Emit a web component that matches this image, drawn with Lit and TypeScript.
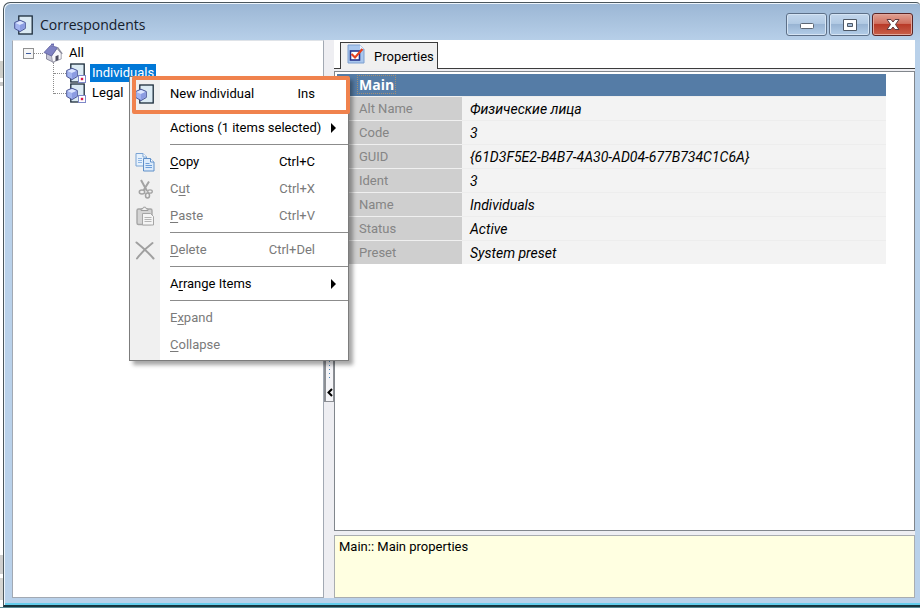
import { LitElement, html, css, svg, nothing } from "lit";
import { customElement, property } from "lit/decorators.js";
import { classMap } from "lit/directives/class-map.js";

type MenuEntry =
  | "separator"
  | { before: string; key: string; after: string; shortcut?: string; icon?: string; disabled?: boolean; submenu?: boolean };

const MENU: MenuEntry[] = [
  { before: "New individual", key: "", after: "", shortcut: "Ins", icon: "page" },
  "separator",
  { before: "Actions (1 items selected)", key: "", after: "", submenu: true },
  "separator",
  { before: "", key: "C", after: "opy", shortcut: "Ctrl+C", icon: "copy" },
  { before: "C", key: "u", after: "t", shortcut: "Ctrl+X", icon: "cut", disabled: true },
  { before: "", key: "P", after: "aste", shortcut: "Ctrl+V", icon: "paste", disabled: true },
  "separator",
  { before: "", key: "D", after: "elete", shortcut: "Ctrl+Del", icon: "delete", disabled: true },
  "separator",
  { before: "A", key: "r", after: "range Items", submenu: true },
  "separator",
  { before: "E", key: "x", after: "pand", disabled: true },
  { before: "", key: "C", after: "ollapse", disabled: true },
];

const PROPERTIES: [string, string][] = [
  ["Alt Name", "Физические лица"],
  ["Code", "3"],
  ["GUID", "{61D3F5E2-B4B7-4A30-AD04-677B734C1C6A}"],
  ["Ident", "3"],
  ["Name", "Individuals"],
  ["Status", "Active"],
  ["Preset", "System preset"],
];

const pageShape = svg`
  <rect x="4.800" y="1" width="13.400" height="18" fill="#dcebf4" stroke="#1b2b3a" stroke-width="1.300"/>
  <path d="M6 5.200 11.300 7.500v6L6 16.600.700 13.500v-6z" fill="#a3b4ef" stroke="#4a5695"/>
  <path d="M1.500 8 6 10l4.500-2L6 6z" fill="#dde6ff"/>
  <path d="M6 10v5.800l4.500-2.700V8z" fill="#8b9ce2"/>`;

const ICONS: Record<string, unknown> = {
  page: pageShape,
  folder: svg`${pageShape}
    <rect x="12.500" y="12.500" width="7" height="7" fill="#fff" stroke="#7f88c8"/>
    <rect x="14.800" y="14.800" width="2.400" height="2.400" fill="#d8194b"/>`,
  house: svg`
    <path d="M3.500 10v6L11 19.500V12z" fill="#c6c6d6" stroke="#77778c" stroke-width=".8"/>
    <path d="M9.500 19.200 18.200 16V10.500L14 5.500 8.500 13z" fill="#f7f7fa" stroke="#8b8b9c" stroke-width=".8"/>
    <path d="M12.500 18.200v-5l3-1.200v5z" fill="#4d4d60"/>
    <path d="M1 9.500 7.500 2.500 14.500 4.500 8.500 13z" fill="#8083c4" stroke="#5e5f9c" stroke-width=".8"/>
    <path d="M14.500 4.500 19.200 10.800" stroke="#8b8b9c" stroke-width="1.300" fill="none"/>
    <path d="M8 .8l3-.3v2.500l-3-.8z" fill="#6c6db0"/>`,
  copy: svg`
    <path d="M1 1.500h7l3.500 3.500v9H1z" fill="#e6f1fc" stroke="#7ba4d4"/>
    <path d="M8 1.500V5h3.500" fill="#fff" stroke="#7ba4d4"/>
    <path d="M3 6.500h4M3 8.500h4M3 10.500h4" stroke="#8fb6e4"/>
    <path d="M8.500 6.500h7l3.500 3.500v9H8.500z" fill="#dcebfb" stroke="#5f8fc8"/>
    <path d="M15.500 6.500V10H19" fill="#fff" stroke="#5f8fc8"/>
    <path d="M10.500 11.500h4M10.500 13.500h6.500M10.500 15.500h6.500" stroke="#6d9ed8"/>`,
  cut: svg`
    <path d="M6 1 12 12M14 2.500 8.500 11.500" stroke="#a3a3a3" stroke-width="2" fill="none"/>
    <ellipse cx="7" cy="13" rx="2.700" ry="2" fill="none" stroke="#a3a3a3" stroke-width="1.500"/>
    <ellipse cx="12.500" cy="16.500" rx="2" ry="2.500" fill="none" stroke="#a3a3a3" stroke-width="1.500"/>
    <ellipse cx="15" cy="12.500" rx="2.300" ry="1.700" fill="none" stroke="#a3a3a3" stroke-width="1.300"/>`,
  paste: svg`
    <rect x="2" y="3" width="15" height="15.500" rx="1.500" fill="#d4d4d4" stroke="#a6a6a6" stroke-width="1.400"/>
    <path d="M6 4.500V3h1.500l1-1.800h2l1 1.800H13v1.500z" fill="#f2f2f2" stroke="#9c9c9c"/>
    <path d="M7.500 7.500h8l3 3v8.500h-11z" fill="#f5f5f5" stroke="#a6a6a6"/>
    <path d="M9.500 11.500h7M9.500 13.500h7M9.500 15.500h7" stroke="#b5b5b5"/>`,
  delete: svg`
    <path d="M1.500 2.500C7 7 13 12 18.500 18.500M17.500 3C11 8 6 13 2 18.500" fill="none" stroke="#a0a0a0" stroke-width="2" stroke-linecap="round"/>`,
  sheet: svg`
    <path d="M2 1h12l4 4v14H2z" fill="#a9c7ee" stroke="#7d9fd0"/>
    <path d="M14 1v4h4z" fill="#eaf3ff"/>
    <rect x="4.500" y="7" width="9" height="9" fill="#fff" stroke="#27358c" stroke-width="1.600"/>
    <path d="M5.500 10 9 13.500 16.500 5" fill="none" stroke="#e5401f" stroke-width="2.200"/>`,
};

@customElement("app-icon")
export class AppIcon extends LitElement {
  @property() name = "page";
  static styles = css`
    :host { display: inline-block; flex: none; width: 20px; height: 20px; }
    svg { display: block; width: 100%; height: 100%; }
  `;
  render() {
    return html`<svg viewBox="0 0 20 20" aria-hidden="true">${ICONS[this.name] ?? nothing}</svg>`;
  }
}

@customElement("context-menu")
export class ContextMenu extends LitElement {
  static styles = css`
    :host { display: block; width: 220px; box-sizing: border-box; border: 1px solid #7c7c7c; padding: 3px 0 2px;
      background: linear-gradient(90deg, #f0f0f0 30px, #fff 30px); box-shadow: 4px 4px 4px rgba(0, 0, 0, 0.35); }
    .item { display: grid; grid-template-columns: 40px 1fr auto 33px; align-items: center; width: 100%; height: 27px;
      padding: 0; border: 0; background: none; font: inherit; color: #000; text-align: left; white-space: nowrap; }
    .item:disabled { color: #7a7a7a; }
    .item app-icon { display: block; margin-left: 5px; }
    .arrow { width: 0; height: 0; margin-left: 16px; border: 5px solid transparent; border-left-color: #000; border-right: 0; }
    .wide .label { grid-column: 2 / 4; }
    .key { text-decoration: underline; text-underline-offset: 2px; }
    hr { height: 1px; margin: 3px 0 3px 40px; border: 0; background: #8c8c8c; }
  `;
  render() {
    return html`<div role="menu">${MENU.map((e) =>
      e === "separator"
        ? html`<hr />`
        : html`<button class=${classMap({ item: true, wide: !!e.submenu })} role="menuitem" ?disabled=${e.disabled}>
            <span>${e.icon ? html`<app-icon name=${e.icon}></app-icon>` : nothing}</span>
            <span class="label">${e.before}<span class="key">${e.key}</span>${e.after}</span>
            ${e.submenu ? nothing : html`<span>${e.shortcut}</span>`}
            <span class=${classMap({ arrow: !!e.submenu })}></span>
          </button>`
    )}</div>`;
  }
}

@customElement("app-root")
export class AppRoot extends LitElement {
  static styles = css`
    :host { box-sizing: border-box; min-height: 100vh; padding: 2px 0 1px 3px;
      display: flex; font: 13px/16px Roboto, "Liberation Sans", sans-serif; color: #000;
      background: linear-gradient(#0000 calc(100% - 1px), #5b8792 0),
        linear-gradient(#fff 61px, #cfcfca 61px, #cfcfca 78px, #fff 78px, #fff 82px, #c8c8c8 82px, #c8c8c8 86px, #fff 86px, #fff 555px,
          #cfcfcf 555px, #cfcfcf 574px, #fff 574px, #fff 578px, #d5d5d2 578px, #d5d5d2 600px, #fff 600px); }
    .window { position: relative; flex: 1; display: flex; flex-direction: column; padding: 0 5px 7px 8px; box-sizing: border-box;
      border: 1px solid #4b565c; border-right: 0; border-bottom: 2px solid #16353f; border-radius: 7px 4px 0 0;
      background: linear-gradient(#9bb6d4, #b9d1ea 40px);
      box-shadow: inset 1px 1px #eef5fc, inset 0 -2px #64cdec; }
    .titlebar { display: flex; align-items: center; height: 37px; padding: 0 2px 0 2px; }
    h1 { flex: 1; margin: 0 0 0 6px; padding-top: 7px; font: 14px/20px "Open Sans", "Noto Sans", sans-serif; color: #15202c; }
    .titlebar app-icon { margin-top: 7px; }
    .controls { display: flex; gap: 2px; padding-top: 6px; }
    .controls button { width: 41px; height: 23px; padding: 0; border: 1px solid #5d7088; border-radius: 3px;
      background: linear-gradient(#c3d7ec, #b2cae4 45%, #98b4d3 50%, #b3cde8); box-shadow: inset 0 0 0 1px #d5e4f4; }
    .controls .close { border-color: #5a2525; background: linear-gradient(#e0a193, #d0705f 45%, #b93a28 50%, #c8604a); box-shadow: inset 0 0 0 1px #e2a69b; }
    .controls svg { display: block; margin: auto; }
    .body { flex: 1; display: grid; grid-template-columns: minmax(0, 312px) 10px minmax(0, 1fr); }
    .tree { border: 1px solid #a2a9b3; border-top-color: #dfe3e8; background: #fff; padding: 2px 0 0 10px; }
    .tree ul { list-style: none; margin: 0; padding: 0; }
    .node { display: flex; align-items: center; height: 20px; }
    .toggle { width: 11px; height: 11px; padding: 0; border: 1px solid #919191; background: linear-gradient(#3b5aa0, #3b5aa0) center / 5px 1px no-repeat, #f6f6f6; }
    .stem { width: 9px; border-top: 1px dotted #8c8c8c; }
    .name { padding: 1px 2px; margin-left: 4px; }
    .selected { background: #0078d7; color: #fff; }
    .tree .children { margin-left: 30px; border-left: 1px dotted #8c8c8c; height: 31px; }
    .children .stem { width: 12px; }
    .splitter { display: flex; flex-direction: column; align-items: center; background: #eeeef2; }
    .grip { box-sizing: border-box; width: 10px; height: 50px; margin-top: 312px; padding: 0; border: 1px solid #8c8f94; border-width: 0 1px 1px 2px; background: #f5f5f8; }
    .grip svg { display: block; }
    .side { display: flex; flex-direction: column; background: #eeeef2; min-width: 0; }
    .tabs { display: flex; height: 29px; box-sizing: border-box; padding: 2px 0 0 6px; border-bottom: 1px solid #3c3c3c; background: #fff; }
    .tab { display: flex; align-items: center; gap: 8px; box-sizing: border-box; width: 98px; height: 27px; padding: 2px 4px 0 5px;
      border: 1px solid #3c3c3c; border-bottom: 0; background: #f0f0f0; font: inherit; color: #000; }
    .tab app-icon { margin-top: -6px; }
    .grid { flex: 1; margin-top: 2px; padding: 2px 28px 0 2px; border: 1px solid #81868c; background: #fff; }
    table { width: 100%; border-collapse: collapse; table-layout: fixed; }
    .keys { width: 125px; }
    th, td { height: 24px; padding: 0; box-sizing: border-box; text-align: left; font-weight: normal; white-space: nowrap; }
    thead th { height: 22px; padding-left: 20px; background: #557ca6; color: #fff; font: bold 14px/18px "Open Sans", sans-serif; }
    .focus { padding: 0 2px; outline: 1px dotted #a58f72; outline-offset: -1px; }
    tbody th { padding: 2px 0 0 22px; background: #cfcfcf; color: #858585; border-top: 1px solid #f0f0f0; }
    tbody td { padding: 2px 0 0 8px; background: #f3f3f3; border-top: 1px solid #ededed; font-style: italic; font-size: 14px; }
    .hint { box-sizing: border-box; height: 63px; margin: 4px 0 0; padding: 3px 4px; border: 1px solid #a9adb0; background: #ffffe1; }
    .popup { position: absolute; left: 125px; top: 73px; }
    .mark { position: absolute; left: 128px; top: 73px; box-sizing: border-box; width: 218px; height: 38px; border: 4px solid #f0824d; border-radius: 2px; pointer-events: none; }
  `;

  private leaf(name: string, selected = false) {
    return html`<li class="node" role="treeitem" aria-selected=${selected}>
      <span class="stem"></span><app-icon name="folder"></app-icon>
      <span class=${classMap({ name: true, selected })}>${name}</span>
    </li>`;
  }

  render() {
    return html`<main class="window">
      <header class="titlebar">
        <app-icon name="page"></app-icon>
        <h1>Correspondents</h1>
        <div class="controls">
          <button aria-label="Minimize"><svg width="16" height="12"><rect x="1.500" y="4.500" width="13" height="5" rx="1" fill="#fff" stroke="#5c6673"/></svg></button>
          <button aria-label="Maximize"><svg width="16" height="12"><path d="M1.500.500h13v11h-13z" fill="#fff" stroke="#4d5866"/><path d="M5.500 4.500h5v3h-5z" fill="#a9c0db" stroke="#4d5866"/></svg></button>
          <button class="close" aria-label="Close"><svg width="16" height="12"><path d="M2 .500h4l2 2.500 2-2.500h4L10.500 5.500l3.500 5h-4L8 8l-2 2.500H2l3.500-5z" fill="#fff" stroke="#5c3b40"/></svg></button>
        </div>
      </header>
      <div class="body">
        <nav class="tree">
          <ul role="tree">
            <li role="treeitem" aria-expanded="true">
              <div class="node"><button class="toggle" aria-label="Collapse All"></button><span class="stem"></span>
                <app-icon name="house"></app-icon><span class="name">All</span></div>
              <ul class="children" role="group">${this.leaf("Individuals", true)}${this.leaf("Legal")}</ul>
            </li>
          </ul>
        </nav>
        <div class="splitter">
          <button class="grip" aria-label="Hide the tree"><svg width="7" height="49">
            <path d="M3.500 1v28" stroke="#4d86b8" stroke-dasharray="1 3"/>
            <path d="M6 37 2.500 40.500 6 44" fill="none" stroke="#000" stroke-width="2"/></svg></button>
        </div>
        <section class="side">
          <div class="tabs" role="tablist">
            <button class="tab" role="tab" aria-selected="true"><app-icon name="sheet"></app-icon>Properties</button>
          </div>
          <div class="grid">
            <table>
              <colgroup><col class="keys" /><col /></colgroup>
              <thead><tr><th colspan="2"><span class="focus">Main</span></th></tr></thead>
              <tbody>${PROPERTIES.map(([k, v]) => html`<tr><th scope="row">${k}</th><td>${v}</td></tr>`)}</tbody>
            </table>
          </div>
          <p class="hint">Main:: Main properties</p>
        </section>
      </div>
      <context-menu class="popup"></context-menu>
      <div class="mark"></div>
    </main>`;
  }
}
